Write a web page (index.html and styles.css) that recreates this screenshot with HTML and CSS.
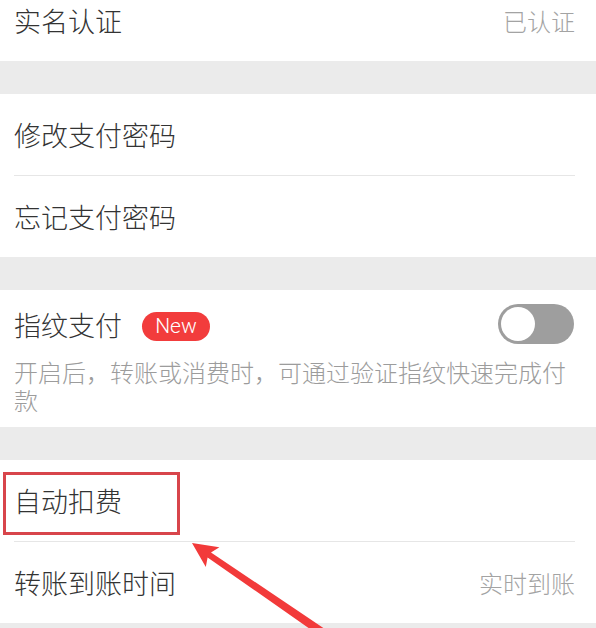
FILE: index.html
```html
<!DOCTYPE html>
<html lang="zh-CN">
<head>
<meta charset="utf-8">
<title>支付设置</title>
<link rel="stylesheet" href="styles.css">
</head>
<body>
<div class="page">
  <section class="group">
    <div class="row">
      <span class="label">实名认证</span>
      <span class="value">已认证</span>
    </div>
  </section>

  <section class="group">
    <div class="row"><span class="label">修改支付密码</span></div>
    <div class="row"><span class="label">忘记支付密码</span></div>
  </section>

  <section class="group finger">
    <div class="finger-head">
      <div class="title-wrap">
        <span class="label">指纹支付</span>
        <span class="badge">New</span>
      </div>
      <span class="toggle"><span class="knob"></span></span>
    </div>
    <p class="desc">开启后，转账或消费时，可通过验证指纹快速完成付款</p>
  </section>

  <section class="group marked">
    <div class="row"><span class="label">自动扣费</span></div>
    <div class="row">
      <span class="label">转账到账时间</span>
      <span class="value">实时到账</span>
    </div>
    <span class="highlight"></span>
  </section>
</div>

<svg class="arrow" width="596" height="628" viewBox="0 0 596 628" aria-hidden="true">
  <polygon fill="#f23a3a" points="192,543 219.4,547.3 211,552.4 343,641.2 338,648.6 207.6,557.4 205.8,567.1"/>
</svg>
</body>
</html>
```

FILE: styles.css
```css
html, body {
  margin: 0;
  padding: 0;
  background: #ebebeb;
}

body {
  font-family: "Noto Sans CJK SC", "Noto Sans", sans-serif;
  font-weight: 300;
  color: #333333;
}

.page {
  margin-top: -20px;
}

.group {
  background: #ffffff;
  padding: 0 21px 0 14px;
  position: relative;
}

.group + .group {
  margin-top: 33px;
}

.row {
  height: 81px;
  display: flex;
  align-items: center;
  justify-content: space-between;
}

.row + .row {
  border-top: 1px solid #e6e6e6;
}

.label {
  font-size: 27px;
  line-height: 1;
  color: #333333;
}

.value {
  font-size: 24px;
  line-height: 1;
  color: #a3a3a3;
}

.finger {
  padding-top: 14px;
  padding-bottom: 13px;
}

.finger-head {
  height: 40px;
  display: flex;
  align-items: center;
  justify-content: space-between;
}

.title-wrap {
  display: flex;
  align-items: center;
}

.badge {
  margin-left: 20px;
  margin-top: 4px;
  height: 29px;
  width: 68px;
  border-radius: 15px;
  background: #f23c3c;
  color: #ffffff;
  font-family: Roboto, "Liberation Sans", sans-serif;
  font-weight: 300;
  font-size: 21px;
  line-height: 29px;
  text-align: center;
}

.toggle {
  width: 76px;
  height: 40px;
  border-radius: 20px;
  background: #9e9e9e;
  display: flex;
  align-items: center;
  padding-left: 3px;
  box-sizing: border-box;
  margin-right: 1px;
}

.knob {
  width: 34px;
  height: 34px;
  border-radius: 50%;
  background: #ffffff;
}

.desc {
  margin: 14px 0 0;
  font-size: 24px;
  line-height: 28px;
  color: #9c9c9c;
}

.highlight {
  position: absolute;
  left: 3px;
  top: 12px;
  width: 177px;
  height: 63px;
  box-sizing: border-box;
  border: 3px solid #d8454b;
  pointer-events: none;
}

.arrow {
  position: absolute;
  left: 0;
  top: 0;
  pointer-events: none;
}
```
